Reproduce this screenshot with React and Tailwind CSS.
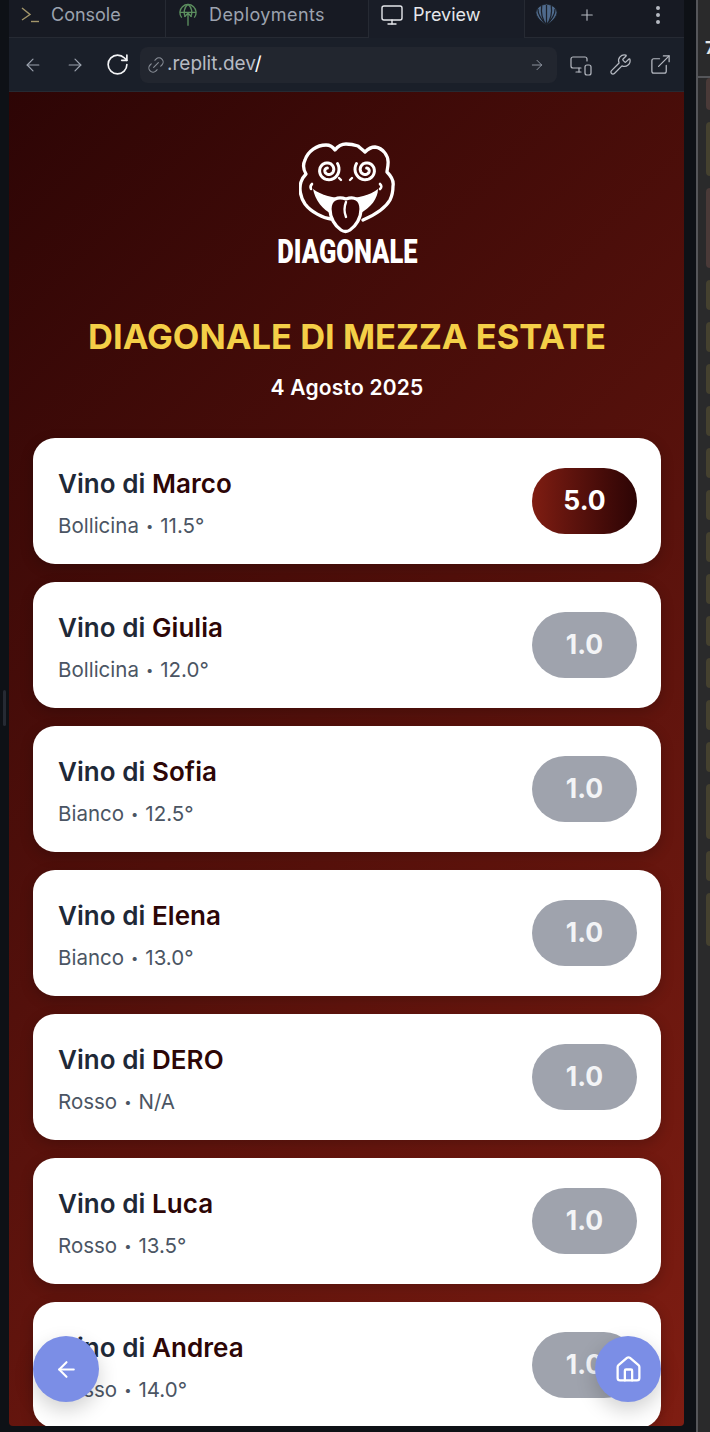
import { ArrowLeft, ArrowRight, RotateCw, Link2, MonitorSmartphone, Wrench, ExternalLink, Monitor, Plus, EllipsisVertical, Home } from 'lucide-react'

const wines = [
  { name: 'Marco', info: 'Bollicina', abv: '11.5°', score: '5.0', top: true },
  { name: 'Giulia', info: 'Bollicina', abv: '12.0°', score: '1.0' },
  { name: 'Sofia', info: 'Bianco', abv: '12.5°', score: '1.0' },
  { name: 'Elena', info: 'Bianco', abv: '13.0°', score: '1.0' },
  { name: 'DERO', info: 'Rosso', abv: 'N/A', score: '1.0' },
  { name: 'Luca', info: 'Rosso', abv: '13.5°', score: '1.0' },
  { name: 'Andrea', info: 'Rosso', abv: '14.0°', score: '1.0' },
]

// coloured rows of the editor peeking in at the right edge
const rows = [
  { h: 32, c: 'bg-[#4a3a38]' }, { h: 54, c: 'bg-[#45412f]' }, { h: 80, c: 'bg-[#4a3a38]' },
  ...[30, 30, 30, 30, 30, 30, 30, 30, 30, 30, 30, 30, 55, 30, 53].map(h => ({ h, c: 'bg-[#45412f]' })),
]

function spiral(cx, cy, dir) {
  const pts = []
  for (let i = 0; i <= 60; i++) {
    const t = i / 60
    const a = -0.6 + t * Math.PI * 3.6
    const r = 11.5 - t * 9.5
    pts.push(`${(cx + dir * r * Math.cos(a)).toFixed(1)} ${(cy + r * Math.sin(a)).toFixed(1)}`)
  }
  return 'M' + pts.join(' L')
}

function Logo() {
  return (
    <svg viewBox="0 0 96 92" className="w-[96px] h-[92px] block" fill="none" stroke="white" strokeLinecap="round" strokeLinejoin="round">
      {/* head */}
      <path strokeWidth="3.3" d="M32 77 C24 76 12 70 6 62 C1 55 0 46 2 40 C3 37 5 34 7 32 C4 27 4 22 6 18 C9 9 18 3 27 3 C31 3 34 5 36 8 C39 4 43 2 47 2 C52 2 56 3 59 4 C61 6 64 8 66 10 C69 7 72 5 76 5 C84 6 90 14 89 22 C89 25 88 28 88 30 C92 34 95 39 94 44 C94 50 93 54 91 58 C87 65 78 72 64 78" />
      {/* spirals */}
      <path strokeWidth="3" d={spiral(29, 28, 1)} />
      <path strokeWidth="3" d={spiral(67, 28, -1)} />
      {/* nostrils */}
      <path strokeWidth="2.4" d="M40 36 L42 38 M53 36 L51 38" />
      {/* mouth */}
      <path stroke="none" fill="white" d="M14 47 C30 59 62 60 79 47 C79 56 72 66 60 72 L33 72 C24 68 16 58 14 47 Z" />
      <path strokeWidth="2.6" d="M12 47 C11 45 11 44 13 42 M81 47 C83 45 83 44 81 42" />
      {/* tongue */}
      <path strokeWidth="3.2" fill="#3a0707" d="M31 67 C31 57 39 54 47 57 C55 54 62 57 62 67 C62 76 57 84 51 88 C48 90 45 90 42 88 C36 84 31 76 31 67 Z" />
      <path strokeWidth="2.4" d="M47 60 C45 65 45 70 47 75" />
    </svg>
  )
}

function WineCard({ wine }) {
  return (
    <div className="shrink-0 h-[126px] bg-white rounded-[22px] pl-[25px] pr-[24px] flex items-center justify-between shadow-[0_4px_14px_rgba(0,0,0,0.2)]">
      <div className="pt-[4px]">
        <div className="text-[26px] leading-[32px] font-semibold text-[#1f2937] tracking-[0.05px]">
          Vino di <span className="text-[#2d0606]">{wine.name}</span>
        </div>
        <div className="mt-[14px] text-[20.5px] leading-[24px] text-[#4b5563]">
          {wine.info}<span className="mx-[7px] text-[13px] align-[2px]">•</span>{wine.abv}
        </div>
      </div>
      <div className={`w-[105px] h-[66px] rounded-full flex items-center justify-center text-[26.5px] font-bold ${wine.top ? 'bg-gradient-to-r from-[#7f1d12] to-[#2d0505] text-white' : 'bg-[#9fa3ad] text-[#f3f4f6]'}`}>
        {wine.score}
      </div>
    </div>
  )
}

export default function App() {
  return (
    <div className="w-[710px] h-[1432px] overflow-hidden flex bg-[#0e1116] font-['Inter',sans-serif]">
      <div className="w-[9px] shrink-0 flex items-center">
        <div className="w-[3px] h-[36px] ml-[3px] mb-[17px] rounded-full bg-[#262a33]" />
      </div>

      <div className="w-[675px] shrink-0 h-[1426px] flex flex-col overflow-hidden rounded-b-[4px]">
        {/* tabs */}
        <div className="h-[38px] shrink-0 flex bg-[#171a23] border-b border-[#262a33] text-[18px] text-[#9ca3af]">
          <div className="w-[157px] flex items-center border-r border-[#262a33] pl-[12px] pb-[8px] gap-[12px]">
            <svg viewBox="0 0 18 18" className="w-[18px] h-[18px]" fill="none" strokeWidth="1.4">
              <path d="M1 2 L9 8.5 L1 14" stroke="#a3966a" />
              <path d="M10 15.5 H18" stroke="#a3966a" />
            </svg>
            <span>Console</span>
          </div>
          <div className="w-[203px] flex items-center border-r border-[#262a33] pl-[13px] pb-[8px] gap-[12px]">
            <svg viewBox="0 0 20 26" className="w-[18px] h-[24px]" fill="none" stroke="#5c8f5f" strokeWidth="1.5">
              <path d="M3 16 A9 9 0 1 1 17 16" />
              <path d="M1 10 H19 M10 1 C5 5 5 11 7 15 M10 1 C15 5 15 11 13 15" />
              <path d="M10 25 V11 M6 15 L10 11 L14 15" />
            </svg>
            <span className="tracking-[0.4px]">Deployments</span>
          </div>
          <div className="w-[156px] -mb-px flex items-center bg-[#191d27] border-r border-[#262a33] pl-[11px] pb-[9px] gap-[9px] text-[#e5e7eb]">
            <Monitor size={24} strokeWidth={1.4} />
            <span>Preview</span>
          </div>
          <div className="flex-1 flex items-center pl-[10px] pb-[8px]">
            <svg viewBox="0 0 24 24" className="w-[23px] h-[23px]" fill="#4f6a8c" stroke="#1b2029" strokeWidth="1">
              <path d="M12 23 C6 20 1 14 1 10 C1 5 6 2 12 1 C18 2 23 5 23 10 C23 14 18 20 12 23 Z" />
              <path fill="none" strokeWidth="1.3" d="M12 23 V2 M12 23 C8 18 6 10 7 3 M12 23 C16 18 18 10 17 3 M12 23 C6 17 3 12 3 6 M12 23 C18 17 21 12 21 6" />
            </svg>
            <Plus size={18} strokeWidth={1.5} className="ml-[20px] text-[#b6bac2]" />
            <EllipsisVertical size={24} strokeWidth={2} className="ml-[50px] text-[#b6bac2]" />
          </div>
        </div>

        {/* address bar */}
        <div className="h-[54px] shrink-0 flex items-center bg-[#1a1f29] border-b border-[#262a33]">
          <ArrowLeft size={20} strokeWidth={1.4} className="ml-[14px] text-[#9ca3af]" />
          <ArrowRight size={20} strokeWidth={1.4} className="ml-[22px] text-[#9ca3af]" />
          <RotateCw size={25} strokeWidth={1.6} className="ml-[20px] text-[#f3f4f6]" />
          <div className="ml-[10px] w-[417px] h-[36px] rounded-[8px] bg-[#22262f] flex items-center pl-[6px] pr-[12px]">
            <Link2 size={20} strokeWidth={1.3} className="text-[#8a8f98] -rotate-45" />
            <span className="ml-[1px] text-[19px] text-[#b6bac2]">.replit.dev<span className="text-white">/</span></span>
            <ArrowRight size={16} strokeWidth={1.3} className="ml-auto text-[#9ca3af]" />
          </div>
          <MonitorSmartphone size={24} strokeWidth={1.2} className="ml-[12px] text-[#b6bac2]" />
          <Wrench size={23} strokeWidth={1.3} className="ml-[16px] text-[#b6bac2]" />
          <ExternalLink size={23} strokeWidth={1.3} className="ml-[17px] text-[#b6bac2]" />
        </div>

        {/* app */}
        <div className="relative flex-1 overflow-hidden">
          <div className="h-full overflow-hidden bg-[linear-gradient(135deg,#2d0505,#7f1d12)] pl-[24px] pr-[23px] pt-[50px] flex flex-col">
            <div className="flex flex-col items-center">
              <Logo />
              <div className="mt-[2px] h-[30px] leading-[30px] text-[34px] font-black text-white font-['Roboto',sans-serif] scale-x-[0.75]">DIAGONALE</div>
            </div>
            <h1 className="mt-[49px] text-center text-[34.5px] leading-[44px] font-bold text-[#f4cf47] whitespace-nowrap">DIAGONALE DI MEZZA ESTATE</h1>
            <p className="mt-[16px] text-center text-[21px] leading-[26px] font-semibold text-white tracking-[0.2px]">4 Agosto 2025</p>
            <div className="mt-[37px] flex flex-col gap-[18px]">
              {wines.map(w => <WineCard key={w.name} wine={w} />)}
            </div>
          </div>

          <button className="absolute left-[24px] bottom-[24px] w-[66px] h-[66px] rounded-full bg-[#7b8ee6] flex items-center justify-center text-white shadow-[0_8px_20px_rgba(0,0,0,0.18)]">
            <ArrowLeft size={25} strokeWidth={2} />
          </button>
          <button className="absolute left-[586px] bottom-[24px] w-[66px] h-[66px] rounded-full bg-[#7b8ee6] flex items-center justify-center text-white shadow-[0_8px_20px_rgba(0,0,0,0.18)]">
            <Home size={29} strokeWidth={1.9} />
          </button>
        </div>
      </div>

      <div className="w-[12px] shrink-0" />
      <div className="w-[2px] shrink-0 bg-[#55565a]" />
      <div className="w-[12px] shrink-0 bg-[#2a2a2b] overflow-hidden">
        <div className="h-[78px] border-b-2 border-[#55565a] relative">
          <span className="absolute left-[7px] top-[38px] text-[18px] leading-[20px] font-bold text-[#e5e5e5]">7</span>
        </div>
        <div className="flex flex-col gap-[12px] pl-[8px]">
          {rows.map((r, i) => <div key={i} className={`rounded-l-[4px] ${r.c}`} style={{ height: r.h }} />)}
        </div>
      </div>
    </div>
  )
}
